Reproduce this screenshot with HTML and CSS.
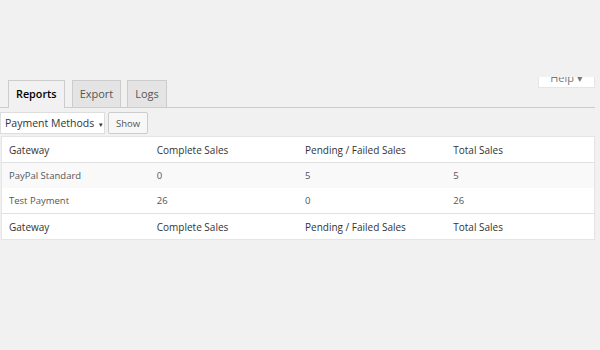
FILE: index.html
```html
<!DOCTYPE html>
<html lang="en">
<head>
    <meta charset="UTF-8">
    <title>Reports</title>
    <link rel="stylesheet" href="styles.css">
</head>
<body>
    <div class="wrap">
        <div class="screen-meta">
            <div class="help-tab"><span>Help &#9662;</span></div>
        </div>

        <!-- Tabs -->
        <div class="nav-tabs">
            <a class="nav-tab active">Reports</a>
            <a class="nav-tab">Export</a>
            <a class="nav-tab">Logs</a>
        </div>

        <!-- Filter -->
        <form class="filters">
            <div class="select">Payment Methods <span class="caret">&#9662;</span></div>
            <button type="button" class="button">Show</button>
        </form>

        <!-- Report table -->
        <table class="report">
            <thead>
                <tr><th>Gateway</th><th>Complete Sales</th><th>Pending / Failed Sales</th><th>Total Sales</th></tr>
            </thead>
            <tbody>
                <tr class="alt"><td>PayPal Standard</td><td>0</td><td>5</td><td>5</td></tr>
                <tr><td>Test Payment</td><td>26</td><td>0</td><td>26</td></tr>
            </tbody>
            <tfoot>
                <tr><th>Gateway</th><th>Complete Sales</th><th>Pending / Failed Sales</th><th>Total Sales</th></tr>
            </tfoot>
        </table>
    </div>
</body>
</html>
```

FILE: styles.css
```css
body {
    margin: 0;
    background-color: #f1f1f1;
    font-family: "Open Sans", sans-serif;
    color: #444444;
}
.wrap {
    width: 595px;
}
.screen-meta {
    display: flex;
    justify-content: flex-end;
    padding-top: 77px;
    height: 3px;
}
.help-tab {
    width: 55px;
    height: 10px;
    background: #ffffff;
    border: 1px solid #e5e5e5;
    border-top: none;
    overflow: hidden;
    text-align: center;
    font-size: 11px;
    color: #777777;
}
.help-tab span {
    display: block;
    margin-top: -7px;
}
.nav-tabs {
    display: flex;
    gap: 6px;
    padding-left: 8px;
    border-bottom: 1px solid #cccccc;
}
.nav-tab {
    display: block;
    height: 26px;
    line-height: 26px;
    padding: 0 7px;
    margin-bottom: -1px;
    border: 1px solid #cccccc;
    border-bottom: none;
    background: #e4e4e4;
    font-size: 11px;
    color: #555555;
}
.nav-tab.active {
    background: #f1f1f1;
    color: #000000;
    font-weight: 600;
    font-size: 10.8px;
    height: 27px;
    margin-right: 1px;
}
.filters {
    display: flex;
    gap: 3px;
    padding: 4px 0 2px 0;
}
.select {
    height: 20px;
    line-height: 20px;
    width: 99px;
    padding-left: 4px;
    background: #ffffff;
    border: 1px solid #dddddd;
    font-size: 10.5px;
    color: #333333;
}
.caret {
    font-size: 7px;
    margin-left: 2px;
}
.button {
    height: 22px;
    padding: 0 7px;
    background: #f7f7f7;
    border: 1px solid #cccccc;
    border-radius: 2px;
    font-family: "Open Sans", sans-serif;
    font-size: 9.5px;
    color: #555555;
}
.report {
    margin-left: 1px;
    width: 594px;
    border-collapse: collapse;
    background: #ffffff;
    border: 1px solid #e5e5e5;
    box-shadow: 0 1px 1px rgba(0, 0, 0, 0.04);
    table-layout: fixed;
}
.report th {
    text-align: left;
    font-weight: normal;
    font-size: 10px;
    color: #333333;
    height: 25px;
    padding: 0 7px;
}
.report thead th {
    border-bottom: 1px solid #e1e1e1;
}
.report tfoot th {
    border-top: 1px solid #e1e1e1;
}
.report td {
    font-size: 9.5px;
    color: #555555;
    height: 25px;
    padding: 0 7px;
}
.report tr.alt td {
    background: #f9f9f9;
}
```
